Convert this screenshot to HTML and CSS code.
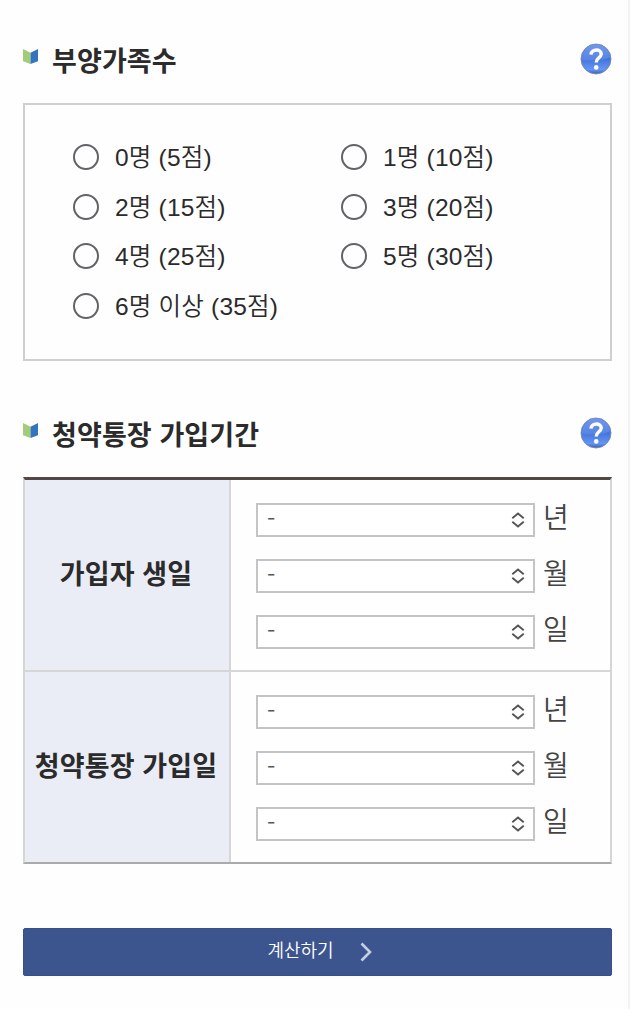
FILE: index.html
```html
<!DOCTYPE html>
<html lang="ko">
<head>
    <meta charset="UTF-8">
    <meta name="viewport" content="width=device-width, initial-scale=1.0">
    <title>청약가점 계산하기</title>
    <link rel="stylesheet" href="styles.css">
</head>
<body>
    <svg class="symbols" width="0" height="0">
        <defs>
            <linearGradient id="help-bg" x1="0" y1="0" x2="0" y2="1">
                <stop offset="0" stop-color="#4d7de0"/>
                <stop offset="0.5" stop-color="#4474dc"/>
                <stop offset="0.85" stop-color="#6395f2"/>
                <stop offset="1" stop-color="#3c5cb0"/>
            </linearGradient>
            <linearGradient id="help-shine" x1="0" y1="0" x2="0" y2="1">
                <stop offset="0" stop-color="#7da0ee"/>
                <stop offset="1" stop-color="#5c88e6"/>
            </linearGradient>
        </defs>
        <symbol id="bullet" viewBox="0 0 14 14">
            <path d="M0 0L7 3.5V14L0 11.5Z" fill="#a3cb78"/>
            <path d="M14 0L7 3.5V14L14 11.5Z" fill="#3474bc"/>
        </symbol>
        <symbol id="help" viewBox="0 0 32 32">
            <circle cx="16" cy="16" r="15" fill="url(#help-bg)" stroke="#7488b8" stroke-width="0.9"/>
            <path d="M2 17A14 14 0 0 1 30 14Q22 19 2 17Z" fill="url(#help-shine)" opacity="0.75"/>
            <path d="M11 11.6C11.4 5.4 21.4 5.6 21.2 11.2C21 14.8 16.2 15 16.2 19.4" fill="none" stroke="#fff" stroke-width="3.4"/>
            <circle cx="16.2" cy="24.4" r="2.3" fill="#fff"/>
        </symbol>
        <symbol id="arrows" viewBox="0 0 14 16">
            <path d="M1.3 6.2L7 1.4L12.7 6.2M1.3 9.8L7 14.6L12.7 9.8" fill="none" stroke="#555" stroke-width="1.9"/>
        </symbol>
    </svg>

    <div class="page">
        <!-- 부양가족수 -->
        <div class="title">
            <svg class="bullet"><use href="#bullet"/></svg>
            <h2>부양가족수</h2>
            <svg class="help"><use href="#help"/></svg>
        </div>
        <div class="family-box">
            <label><input type="radio" name="family"><span>0명 (5점)</span></label>
            <label><input type="radio" name="family"><span>1명 (10점)</span></label>
            <label><input type="radio" name="family"><span>2명 (15점)</span></label>
            <label><input type="radio" name="family"><span>3명 (20점)</span></label>
            <label><input type="radio" name="family"><span>4명 (25점)</span></label>
            <label><input type="radio" name="family"><span>5명 (30점)</span></label>
            <label><input type="radio" name="family"><span>6명 이상 (35점)</span></label>
        </div>

        <!-- 청약통장 가입기간 -->
        <div class="title title-period">
            <svg class="bullet"><use href="#bullet"/></svg>
            <h2>청약통장 가입기간</h2>
            <svg class="help"><use href="#help"/></svg>
        </div>
        <div class="period">
            <div class="period-row">
                <div class="period-name">가입자 생일</div>
                <div class="period-date">
                    <div class="field"><div class="select"><span>-</span><svg><use href="#arrows"/></svg></div><span class="unit">년</span></div>
                    <div class="field"><div class="select"><span>-</span><svg><use href="#arrows"/></svg></div><span class="unit">월</span></div>
                    <div class="field"><div class="select"><span>-</span><svg><use href="#arrows"/></svg></div><span class="unit">일</span></div>
                </div>
            </div>
            <div class="period-row">
                <div class="period-name">청약통장 가입일</div>
                <div class="period-date">
                    <div class="field"><div class="select"><span>-</span><svg><use href="#arrows"/></svg></div><span class="unit">년</span></div>
                    <div class="field"><div class="select"><span>-</span><svg><use href="#arrows"/></svg></div><span class="unit">월</span></div>
                    <div class="field"><div class="select"><span>-</span><svg><use href="#arrows"/></svg></div><span class="unit">일</span></div>
                </div>
            </div>
        </div>

        <button class="calc-btn" type="button">
            <span>계산하기</span>
            <svg viewBox="0 0 12 20"><path d="M1.5 1.5L10 10L1.5 18.5" fill="none" stroke="#c6cfe4" stroke-width="2.6"/></svg>
        </button>
    </div>
</body>
</html>
```
FILE: styles.css
```css
* {
    box-sizing: border-box;
}
body {
    margin: 0;
    background-color: #fefefe;
    font-family: "Liberation Sans", "Noto Sans CJK KR", sans-serif;
    color: #2b2b2b;
}
.symbols {
    display: block;
}
.page {
    height: 1009px;
    padding: 40px 16px 0 23px;
    border-right: 2px solid #f3f3f3;
    overflow: hidden;
}
.title {
    display: flex;
    align-items: center;
    height: 40px;
}
.title h2 {
    flex: 1;
    margin: 0 0 1px 14px;
    font-family: "Noto Sans CJK KR", sans-serif;
    font-size: 27px;
    font-weight: bold;
    line-height: 38px;
    letter-spacing: 0.1px;
}
.bullet {
    width: 15px;
    height: 15px;
    margin-bottom: 8px;
}
.help {
    width: 32px;
    height: 32px;
    margin-bottom: 2px;
}
.family-box {
    display: grid;
    grid-template-columns: 268px 1fr;
    grid-auto-rows: 49.7px;
    height: 258px;
    margin-top: 23px;
    padding: 27px 0 0 47px;
    border: 2px solid #cfcfcf;
}
.family-box label {
    display: flex;
    align-items: center;
    font-size: 24.5px;
    font-weight: 350;
    letter-spacing: 0.2px;
    white-space: nowrap;
}
.family-box label span {
    margin-bottom: 3px;
}
.family-box input {
    appearance: none;
    width: 26px;
    height: 26px;
    margin: 0 16px 0 1px;
    border: 2.5px solid #626267;
    border-radius: 50%;
}
.title-period {
    margin-top: 53px;
}
.period {
    margin-top: 23px;
    border: 2px solid #d6d6d6;
    border-top: 3px solid #514845;
    border-bottom-color: #aaa;
}
.period-row {
    display: flex;
    height: 190px;
}
.period-row + .period-row {
    height: 192px;
    border-top: 2px solid #d6d6d6;
}
.period-name {
    display: flex;
    align-items: center;
    justify-content: center;
    width: 206px;
    padding: 0 2px 5px 0;
    background-color: #eaedf6;
    border-right: 2px solid #d6d6d6;
    font-family: "Noto Sans CJK KR", sans-serif;
    font-size: 27px;
    font-weight: bold;
    letter-spacing: 0.15px;
    white-space: nowrap;
}
.period-date {
    display: flex;
    flex-direction: column;
    gap: 22px;
    padding: 23px 0 0 25px;
}
.field {
    display: flex;
    height: 34px;
}
.select {
    display: flex;
    justify-content: space-between;
    width: 279px;
    padding: 0 8px 0 9px;
    background-color: #fff;
    border: 2px solid #c4c4c4;
    font-family: "Noto Sans CJK KR", sans-serif;
    font-size: 24px;
    font-weight: 350;
    line-height: 25px;
    color: #555;
}
.select svg {
    width: 14px;
    height: 16px;
    margin-top: 7px;
}
.unit {
    margin-left: 8px;
    font-family: "Noto Sans CJK KR", sans-serif;
    font-size: 28px;
    font-weight: 350;
    line-height: 26px;
    color: #444;
}
.calc-btn {
    display: flex;
    align-items: center;
    justify-content: center;
    gap: 26px;
    width: 589px;
    height: 48px;
    margin-top: 64px;
    padding: 0 0 0 4px;
    background-color: #3c558f;
    border: 1px solid #3a4f88;
    border-radius: 2px;
    font-family: "Noto Sans CJK KR", sans-serif;
    font-size: 18px;
    font-weight: 350;
    color: #fff;
}
.calc-btn span {
    margin-bottom: 6px;
}
.calc-btn svg {
    width: 12px;
    height: 20px;
}
```
